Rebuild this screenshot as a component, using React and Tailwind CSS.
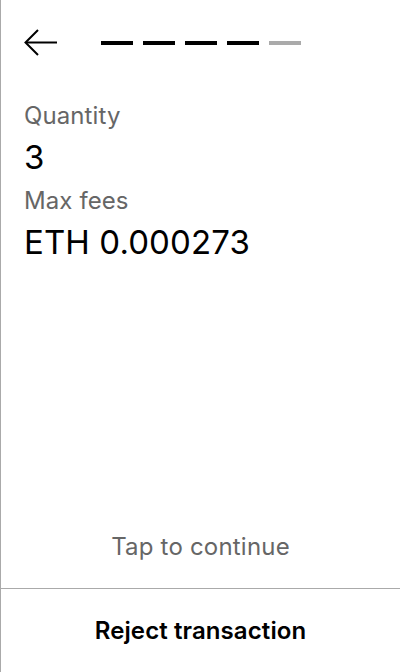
import React from "react";

function BackArrow() {
    return (
        <svg width="34" height="28" viewBox="0 0 34 28" fill="none" stroke="black" strokeWidth="2">
            <path d="M33 13.5H2" />
            <path d="M14 1L1.5 13.5L14 26" />
        </svg>
    )
}

export default function App() {
    const steps = [true, true, true, true, false]

    return (
        <div className="h-[672px] w-[400px] flex flex-col bg-white border-l border-[#aaaaaa] text-black" style={{ fontFamily: "Inter, 'Noto Sans', sans-serif" }}>
            <div className="flex items-center pl-[23px] pt-[29px] h-[57px]">
                <BackArrow />
                <div className="flex gap-[10px] ml-[43px]">
                    { steps.map((done, i) => <div key={ i } className={ "w-[32px] h-[4px] " + (done ? "bg-black" : "bg-[#aaaaaa]") } />) }
                </div>
            </div>

            <div className="px-[23px] pt-[44px] flex-1">
                <div className="text-[24px] leading-[29px] tracking-[0.1px] text-[#666666]">Quantity</div>
                <div className="text-[33px] leading-[40px] tracking-[0.1px] mt-[7px]">3</div>
                <div className="text-[24px] leading-[29px] tracking-[0.1px] text-[#666666] mt-[9px]">Max fees</div>
                <div className="text-[33px] leading-[40px] tracking-[0.1px] mt-[7px]">ETH 0.000273</div>
            </div>

            <div className="text-center text-[24px] leading-[29px] tracking-[0.2px] text-[#666666] pb-[27px]">Tap to continue</div>
            <div className="border-t border-[#aaaaaa] h-[84px] flex items-center justify-center">
                <div className="text-[24px] leading-[29px] tracking-[0.1px] font-semibold">Reject transaction</div>
            </div>
        </div>
    )
}
